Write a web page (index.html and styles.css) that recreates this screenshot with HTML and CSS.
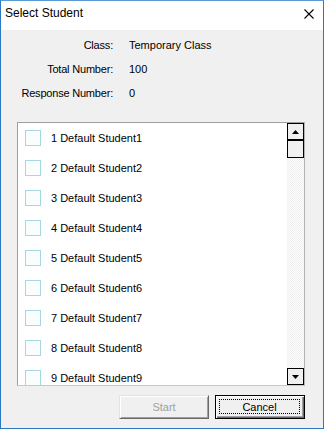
FILE: index.html
```html
<!DOCTYPE html>
<html>
<head>
	<meta charset="utf-8">
	<title>Select Student</title>
	<link rel="stylesheet" href="styles.css">
</head>
<body>
<div class="win">
	<div class="title">
		<span class="caption">Select Student</span>
		<svg class="close" width="10" height="10" viewBox="0 0 10 10"><path d="M0.5 0.5L9.5 9.5M9.5 0.5L0.5 9.5" stroke="#000" stroke-width="1.1" fill="none"/></svg>
	</div>
	<div class="info">
		<span class="lbl">Class:</span><span>Temporary Class</span>
		<span class="lbl">Total Number:</span><span>100</span>
		<span class="lbl">Response Number:</span><span>0</span>
	</div>
	<div class="list">
		<div class="items">
			<div class="item"><span class="box"></span>1 Default Student1</div>
			<div class="item"><span class="box"></span>2 Default Student2</div>
			<div class="item"><span class="box"></span>3 Default Student3</div>
			<div class="item"><span class="box"></span>4 Default Student4</div>
			<div class="item"><span class="box"></span>5 Default Student5</div>
			<div class="item"><span class="box"></span>6 Default Student6</div>
			<div class="item"><span class="box"></span>7 Default Student7</div>
			<div class="item"><span class="box"></span>8 Default Student8</div>
			<div class="item"><span class="box"></span>9 Default Student9</div>
		</div>
		<div class="sbar">
			<div class="sbtn"><svg width="7" height="4" viewBox="0 0 7 4"><polygon points="3.5,0 7,4 0,4" fill="#000"/></svg></div>
			<div class="thumb"></div>
			<div class="track"></div>
			<div class="sbtn"><svg width="7" height="4" viewBox="0 0 7 4"><polygon points="0,0 7,0 3.5,4" fill="#000"/></svg></div>
		</div>
	</div>
	<div class="btns">
		<div class="btn off">Start</div>
		<div class="btn def"><span class="focus">Cancel</span></div>
	</div>
</div>
</body>
</html>
```

FILE: styles.css
```css
body{
	margin: 0;
	font-family: "Liberation Sans", Arial, sans-serif;
	font-size: 11px;
	color: #000;
}
.win{
	box-sizing: border-box;
	width: 324px;
	height: 429px;
	border: 1px solid #2b79c2;
	border-top-color: #5a9ad4;
	background: #f0f0f0;
	display: flex;
	flex-direction: column;
}
.title{
	height: 29px;
	background: #fff;
	display: flex;
	align-items: center;
	justify-content: space-between;
	padding: 0 9px 0 4px;
	font-size: 12px;
}
.caption{
	margin-top: -5px;
}
.close{
	margin-top: -4px;
}
.info{
	display: grid;
	grid-template-columns: 112px auto;
	grid-auto-rows: 24px;
	column-gap: 16px;
	align-items: center;
	padding-top: 3px;
}
.lbl{
	text-align: right;
	letter-spacing: -0.2px;
}
.list{
	box-sizing: border-box;
	margin: 17px 18px 0 16px;
	height: 264px;
	border: 1px solid #a0a0a0;
	border-right-color: #b4b4b4;
	border-bottom-color: #c8c8c8;
	background: #fff;
	display: flex;
}
.items{
	flex: 1;
	overflow: hidden;
}
.item{
	height: 30px;
	display: flex;
	align-items: center;
	padding-left: 7px;
	gap: 10px;
	white-space: nowrap;
}
.box{
	box-sizing: border-box;
	width: 16px;
	height: 16px;
	border: 1px solid #a6d8e2;
	background: #f9fdfe;
}
.sbar{
	width: 17px;
	display: flex;
	flex-direction: column;
}
.sbtn{
	box-sizing: border-box;
	height: 17px;
	border: 1px solid #000;
	background: #f0f0f0;
	display: flex;
	align-items: center;
	justify-content: center;
}
.thumb{
	box-sizing: border-box;
	height: 18px;
	border: 1px solid #000;
	background: #f0f0f0;
}
.track{
	flex: 1;
	background: repeating-conic-gradient(#ededed 0 25%, #fff 0 50%) 0 0 / 2px 2px;
}
.btns{
	display: flex;
	justify-content: flex-end;
	gap: 6px;
	margin: 9px 18px 0 0;
}
.btn{
	box-sizing: border-box;
	width: 90px;
	height: 24px;
	display: flex;
	align-items: center;
	justify-content: center;
	background: #f0f0f0;
	box-shadow: inset 1px 1px #fff, inset -1px -1px #696969, inset -2px -2px #a0a0a0;
}
.off{
	color: #a0a0a0;
	border: 1px solid #e3e3e3;
	border-right-color: #696969;
	border-bottom-color: #696969;
	box-shadow: inset 1px 1px #fff, inset -1px -1px #a0a0a0;
}
.def{
	border: 1px solid #000;
	padding: 3px 4px 4px 3px;
}
.focus{
	box-sizing: border-box;
	width: 100%;
	height: 100%;
	border: 1px dotted #000;
	display: flex;
	align-items: center;
	justify-content: center;
}
```
